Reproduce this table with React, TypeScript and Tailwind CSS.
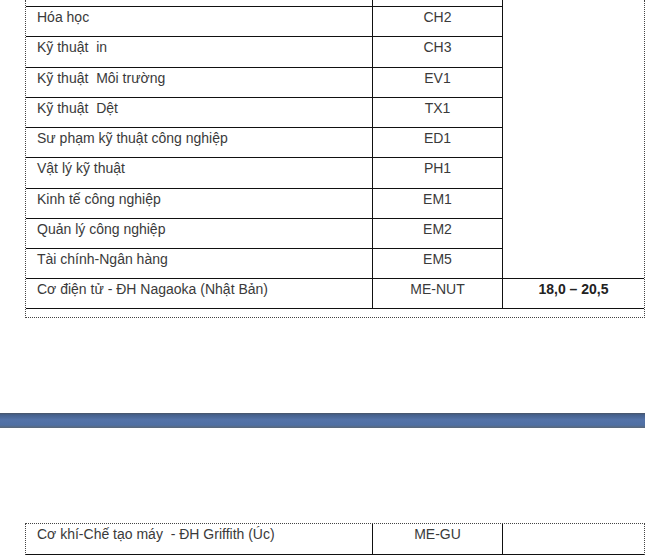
import React from 'react';

type Row = { name: string; code: string; h: string };

// row heights follow the line positions of the scanned table
const rows: Row[] = [
  { name: 'Hóa học', code: 'CH2', h: 'h-[30px] border-b' },
  { name: 'Kỹ thuật  in', code: 'CH3', h: 'h-[31px] border-b' },
  { name: 'Kỹ thuật  Môi trường', code: 'EV1', h: 'h-[30px] border-b' },
  { name: 'Kỹ thuật  Dệt', code: 'TX1', h: 'h-[30px] border-b' },
  { name: 'Sư phạm kỹ thuật công nghiệp', code: 'ED1', h: 'h-[30px] border-b' },
  { name: 'Vật lý kỹ thuật', code: 'PH1', h: 'h-[31px] border-b' },
  { name: 'Kinh tế công nghiệp', code: 'EM1', h: 'h-[30px] border-b' },
  { name: 'Quản lý công nghiệp', code: 'EM2', h: 'h-[30px] border-b' },
  { name: 'Tài chính-Ngân hàng', code: 'EM5', h: 'h-[29px]' },
];

const font = { fontFamily: '"Liberation Sans", Arial, sans-serif' };

const NameCell: React.FC<{ children: React.ReactNode }> = ({ children }) => (
  <div className="w-[346px] pl-[11px] pt-[1px] leading-[18px] whitespace-pre">
    {children}
  </div>
);

const CodeCell: React.FC<{ children: React.ReactNode }> = ({ children }) => (
  <div className="w-[130px] border-l border-[#111] pt-[1px] text-center leading-[18px]">
    {children}
  </div>
);

export default function App() {
  return (
    <div
      className="w-[645px] h-[555px] overflow-hidden bg-white text-[14px] text-[#3a3a3a]"
      style={font}
    >
      {/* upper table, its first row cut off by the top edge */}
      <div className="ml-[25px] w-[620px] border-x border-b border-dotted border-[#444] pb-[8px]">
        <div className="flex">
          <div className="flex flex-col">
            <div className="flex h-[7px] border-b border-[#111]">
              <div className="w-[346px]" />
              <div className="w-[130px] border-l border-[#111]" />
            </div>
            {rows.map((r) => (
              <div key={r.code} className={`flex border-[#111] ${r.h}`}>
                <NameCell>{r.name}</NameCell>
                <CodeCell>{r.code}</CodeCell>
              </div>
            ))}
          </div>
          <div className="w-[142px] border-l border-[#111]" />
        </div>
        <div className="flex h-[31px] border-y border-[#111]">
          <NameCell>Cơ điện tử - ĐH Nagaoka (Nhật Bản)</NameCell>
          <CodeCell>ME-NUT</CodeCell>
          <div className="w-[142px] border-l border-[#111] pt-[1px] text-center leading-[18px] font-bold text-[#222]">
            18,0 – 20,5
          </div>
        </div>
      </div>

      {/* page separator */}
      <div className="mt-[95px] h-[15px] w-full bg-[linear-gradient(to_bottom,#4a5565_0%,#45608c_12%,#5473a8_45%,#5070a4_80%,#5b6876_100%)]" />

      {/* next page table */}
      <div className="mt-[95px] ml-[25px] w-[620px] border-x border-t border-dotted border-[#444]">
        <div className="flex h-[31px] border-b border-[#111]">
          <NameCell>Cơ khí-Chế tạo máy  - ĐH Griffith (Úc)</NameCell>
          <CodeCell>ME-GU</CodeCell>
          <div className="w-[142px] border-l border-[#111]" />
        </div>
      </div>
    </div>
  );
}
